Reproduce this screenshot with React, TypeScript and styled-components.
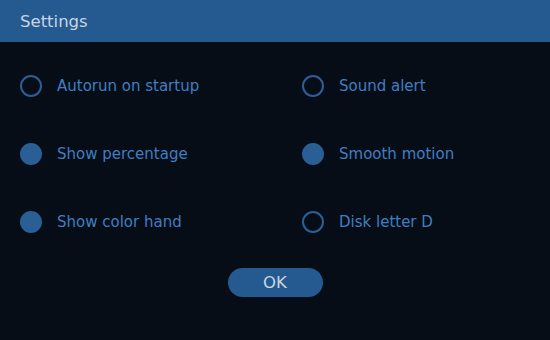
import React, { useState } from "react";
import styled, { createGlobalStyle } from "styled-components";

const GlobalStyle = createGlobalStyle`
  html, body {
    margin: 0;
    padding: 0;
    background: #070d17;
  }
  * {
    box-sizing: border-box;
  }
`;

const Window = styled.div`
  width: 550px;
  height: 340px;
  background: #070d17;
  font-family: "DejaVu Sans", Verdana, sans-serif;
  display: flex;
  flex-direction: column;
`;

const Header = styled.div`
  height: 42px;
  background: #245a8f;
  color: #c9d5e2;
  font-size: 16.5px;
  display: flex;
  align-items: center;
  padding-left: 20px;
`;

const OptionGrid = styled.div`
  display: grid;
  grid-template-columns: 282px 1fr;
  grid-auto-rows: 22px;
  row-gap: 46px;
  padding: 33px 20px 0;
`;

const Option = styled.label`
  display: flex;
  align-items: center;
  gap: 15px;
  cursor: pointer;
  color: #3f7fc1;
  font-size: 15px;
`;

const Radio = styled.span<{ $checked: boolean }>`
  width: 22px;
  height: 22px;
  border-radius: 50%;
  border: 2px solid #2a5f96;
  background: ${(p) => (p.$checked ? "#2a5f96" : "transparent")};
  flex-shrink: 0;
`;

const Footer = styled.div`
  display: flex;
  justify-content: center;
  padding-top: 35px;
`;

const OkButton = styled.button`
  width: 95px;
  height: 29px;
  border: none;
  border-radius: 15px;
  background: #245a8f;
  color: #c9d5e2;
  font-family: "DejaVu Sans", Verdana, sans-serif;
  font-size: 16.5px;
  cursor: pointer;
  padding: 0;
`;

const initialOptions = [
  { id: "autorun", label: "Autorun on startup", on: false },
  { id: "sound", label: "Sound alert", on: false },
  { id: "percent", label: "Show percentage", on: true },
  { id: "smooth", label: "Smooth motion", on: true },
  { id: "colorHand", label: "Show color hand", on: true },
  { id: "diskD", label: "Disk letter D", on: false },
];

export default function App() {
  const [options, setOptions] = useState(initialOptions);

  const toggle = (id: string) => {
    setOptions((prev) =>
      prev.map((o) => (o.id === id ? { ...o, on: !o.on } : o))
    );
  };

  return (
    <>
      <GlobalStyle />
      <Window>
        <Header>Settings</Header>
        <OptionGrid>
          {options.map((o) => (
            <Option key={o.id} onClick={() => toggle(o.id)}>
              <Radio $checked={o.on} />
              {o.label}
            </Option>
          ))}
        </OptionGrid>
        <Footer>
          <OkButton>OK</OkButton>
        </Footer>
      </Window>
    </>
  );
}
